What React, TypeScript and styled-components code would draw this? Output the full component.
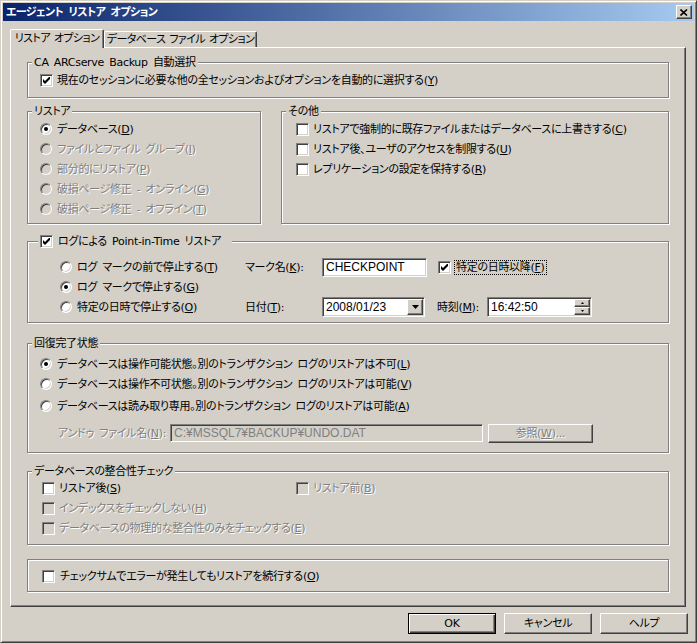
import React from 'react';
import styled, { createGlobalStyle, css } from 'styled-components';

const GlobalStyle = createGlobalStyle`
    html, body {
        margin: 0;
        padding: 0;
        background: #d4d0c8;
    }
    body {
        font-family: "DejaVu Sans", "Noto Sans CJK JP", sans-serif;
        font-size: 11px;
        line-height: 13px;
        letter-spacing: -0.3px;
        word-spacing: 2px;
        color: #000;
        font-feature-settings: "palt";
    }
`;

const sunken = css`
    border: 1px solid;
    border-color: #808080 #fff #fff #808080;
    box-shadow: inset 1px 1px 0 #404040, inset -1px -1px 0 #d4d0c8;
`;

const raised = css`
    border: 1px solid;
    border-color: #fff #404040 #404040 #fff;
    box-shadow: inset -1px -1px 0 #808080;
`;

const Window = styled.div`
    width: 697px;
    height: 643px;
    box-sizing: border-box;
    background: #d4d0c8;
    border: 1px solid;
    border-color: #d4d0c8 #404040 #404040 #d4d0c8;
    box-shadow: inset 1px 1px 0 #fff, inset -1px -1px 0 #808080;
    padding: 2px;
    display: flex;
    flex-direction: column;
`;

const TitleBar = styled.div`
    height: 18px;
    flex-shrink: 0;
    background: linear-gradient(to right, #0a246a, #a6caf0);
    display: flex;
    align-items: center;
    justify-content: space-between;
    padding: 0 2px 0 3px;
    color: #fff;
    font-weight: bold;
    font-size: 11px;
    letter-spacing: -0.6px;
`;

const CloseButton = styled.div`
    box-sizing: border-box;
    width: 16px;
    height: 14px;
    background: #d4d0c8;
    ${raised};
    display: flex;
    align-items: center;
    justify-content: center;
`;

const Body = styled.div`
    padding: 8px 7px 0 7px;
    display: flex;
    flex-direction: column;
`;

const TabStrip = styled.div`
    height: 18px;
    display: flex;
    align-items: flex-end;
`;

const Tab = styled.div<{ $active?: boolean; $w: number }>`
    box-sizing: border-box;
    width: ${(p) => p.$w}px;
    height: ${(p) => (p.$active ? 19 : 16)}px;
    margin-bottom: ${(p) => (p.$active ? -1 : 0)}px;
    position: relative;
    z-index: ${(p) => (p.$active ? 2 : 0)};
    background: #d4d0c8;
    border-top: 1px solid #fff;
    border-left: 1px solid #fff;
    border-right: 1px solid #404040;
    border-radius: 2px 2px 0 0;
    box-shadow: inset -1px 0 0 #808080;
    display: flex;
    align-items: center;
    justify-content: center;
    padding-bottom: ${(p) => (p.$active ? 1 : 0)}px;
    white-space: nowrap;
    letter-spacing: -0.6px;
    word-spacing: 1px;
`;

const Panel = styled.div`
    box-sizing: border-box;
    width: 676px;
    height: 560px;
    border-top: 1px solid #fff;
    border-left: 1px solid #fff;
    border-right: 1px solid #404040;
    border-bottom: 1px solid #404040;
    box-shadow: inset -1px -1px 0 #808080;
    padding: 0 16px;
    display: flex;
    flex-direction: column;
`;

const Group = styled.div<{ $h: number; $mt?: number; $w?: number; $ml?: number; $pad: string }>`
    position: relative;
    box-sizing: border-box;
    flex-shrink: 0;
    height: ${(p) => p.$h}px;
    margin-top: ${(p) => p.$mt ?? 0}px;
    margin-left: ${(p) => p.$ml ?? 0}px;
    width: ${(p) => (p.$w ? `${p.$w}px` : '100%')};
    border: 1px solid #808080;
    box-shadow: inset 1px 1px 0 #fff, 1px 1px 0 #fff;
    padding: ${(p) => p.$pad};
`;

const GroupRow = styled.div`
    display: flex;
    margin-top: 13px;
`;

const GroupTitle = styled.div`
    position: absolute;
    top: -7px;
    left: 4px;
    padding: 0 2px;
    background: #d4d0c8;
    white-space: nowrap;
`;

const GroupHeader = styled.div`
    position: absolute;
    top: -8px;
    left: 10px;
    width: 194px;
    height: 15px;
    padding-left: 2px;
    box-sizing: border-box;
    background: #d4d0c8;
    display: flex;
    align-items: center;
`;

const Row = styled.div<{ $h?: number; $mt?: number; $pl?: number }>`
    display: flex;
    align-items: center;
    height: ${(p) => p.$h ?? 20}px;
    margin-top: ${(p) => p.$mt ?? 0}px;
    padding-left: ${(p) => p.$pl ?? 0}px;
    white-space: nowrap;
`;

const Cell = styled.div<{ $w: number; $ml?: number }>`
    width: ${(p) => p.$w}px;
    margin-left: ${(p) => p.$ml ?? 0}px;
    flex-shrink: 0;
    display: flex;
    align-items: center;
`;

const Option = styled.span<{ $gap: number }>`
    display: inline-flex;
    align-items: center;
    gap: ${(p) => p.$gap}px;
`;

const Text = styled.span<{ $disabled?: boolean }>`
    color: ${(p) => (p.$disabled ? '#808080' : '#000')};
    text-shadow: ${(p) => (p.$disabled ? '1px 1px 0 #fff' : 'none')};
    white-space: nowrap;
`;

const Key = styled.u`
    text-underline-offset: 1px;
`;

const Focus = styled.span`
    outline: 1px dotted #000;
    outline-offset: 0;
    padding: 0 1px;
`;

const CheckBox = styled.span<{ $disabled?: boolean }>`
    box-sizing: border-box;
    width: 13px;
    height: 13px;
    flex-shrink: 0;
    background: ${(p) => (p.$disabled ? '#d4d0c8' : '#fff')};
    ${sunken};
    display: flex;
    align-items: center;
    justify-content: center;
`;

const RadioDot = styled.span<{ $disabled?: boolean; $checked?: boolean }>`
    box-sizing: border-box;
    position: relative;
    width: 12px;
    height: 12px;
    flex-shrink: 0;
    border-radius: 50%;
    background: ${(p) => (p.$disabled ? '#d4d0c8' : '#fff')};
    ${sunken};
    &::after {
        content: '';
        display: ${(p) => (p.$checked ? 'block' : 'none')};
        position: absolute;
        left: 3px;
        top: 3px;
        width: 4px;
        height: 4px;
        border-radius: 50%;
        background: #000;
    }
`;

const TextBox = styled.div<{ $w: number; $h: number; $disabled?: boolean }>`
    box-sizing: border-box;
    width: ${(p) => p.$w}px;
    height: ${(p) => p.$h}px;
    flex-shrink: 0;
    background: ${(p) => (p.$disabled ? '#d4d0c8' : '#fff')};
    color: ${(p) => (p.$disabled ? '#808080' : '#000')};
    ${sunken};
    padding: 1px 1px 1px 3px;
    display: flex;
    align-items: center;
    font-family: "Liberation Sans", "Noto Sans CJK JP", sans-serif;
    font-size: 12px;
    letter-spacing: 0;
    word-spacing: 0;
`;

const BoxValue = styled.span`
    flex: 1;
    white-space: nowrap;
`;

const DropButton = styled.span`
    box-sizing: border-box;
    width: 16px;
    height: 100%;
    background: #d4d0c8;
    ${raised};
    display: flex;
    align-items: center;
    justify-content: center;
`;

const Spinner = styled.span`
    width: 16px;
    height: 100%;
    display: flex;
    flex-direction: column;
`;

const SpinHalf = styled.span`
    box-sizing: border-box;
    flex: 1;
    background: #d4d0c8;
    ${raised};
    display: flex;
    align-items: center;
    justify-content: center;
`;

const ButtonRow = styled.div`
    display: flex;
    justify-content: flex-end;
    gap: 8px;
    margin-top: 6px;
    margin-right: -1px;
`;

const Button = styled.button<{ $default?: boolean; $w?: number; $h?: number; $ml?: number }>`
    box-sizing: border-box;
    width: ${(p) => p.$w ?? 88}px;
    height: ${(p) => p.$h ?? 21}px;
    margin-left: ${(p) => p.$ml ?? 0}px;
    padding: 0;
    font: inherit;
    letter-spacing: inherit;
    word-spacing: inherit;
    color: #000;
    background: #d4d0c8;
    ${raised};
    ${(p) =>
        p.$default &&
        css`
            border: 1px solid #000;
            box-shadow: inset 1px 1px 0 #fff, inset -1px -1px 0 #404040, inset -2px -2px 0 #808080;
        `}
    display: flex;
    align-items: center;
    justify-content: center;
`;

const Tick = () => (
    <svg width="7" height="7" viewBox="0 0 7 7">
        <polygon points="0,2 2,4 7,-1 7,2 2,7 0,5" fill="#000" />
    </svg>
);

const Check = ({
    checked,
    disabled,
    gap = 4,
    children,
}: {
    checked?: boolean;
    disabled?: boolean;
    gap?: number;
    children: React.ReactNode;
}) => (
    <Option $gap={gap}>
        <CheckBox $disabled={disabled}>{checked && <Tick />}</CheckBox>
        {children}
    </Option>
);

const Radio = ({
    checked,
    disabled,
    children,
}: {
    checked?: boolean;
    disabled?: boolean;
    children: React.ReactNode;
}) => (
    <Option $gap={5}>
        <RadioDot $checked={checked} $disabled={disabled} />
        <Text $disabled={disabled}>{children}</Text>
    </Option>
);

const restoreItems = [
    { id: 1, label: 'データベース', key: 'D', checked: true, disabled: false },
    { id: 2, label: 'ファイルとファイル グループ', key: 'I', checked: false, disabled: true },
    { id: 3, label: '部分的にリストア', key: 'P', checked: false, disabled: true },
    { id: 4, label: '破損ページ修正 - オンライン', key: 'G', checked: false, disabled: true },
    { id: 5, label: '破損ページ修正 - オフライン', key: 'T', checked: false, disabled: true },
];

const otherItems = [
    { id: 1, label: 'リストアで強制的に既存ファイルまたはデータベースに上書きする', key: 'C' },
    { id: 2, label: 'リストア後、ユーザのアクセスを制限する', key: 'U' },
    { id: 3, label: 'レプリケーションの設定を保持する', key: 'R' },
];

const recoveryItems = [
    { id: 1, label: 'データベースは操作可能状態。別のトランザクション ログのリストアは不可', key: 'L', mt: 0 },
    { id: 2, label: 'データベースは操作不可状態。別のトランザクション ログのリストアは可能', key: 'V', mt: 0 },
    { id: 3, label: 'データベースは読み取り専用。別のトランザクション ログのリストアは可能', key: 'A', mt: 2 },
];

const App = () => {
    return (
        <>
            <GlobalStyle />
            <Window>
                <TitleBar>
                    <span>エージェント リストア オプション</span>
                    <CloseButton>
                        <svg width="8" height="7" viewBox="0 0 8 7">
                            <path d="M0.5 0.5 L7 6.5 M7 0.5 L0.5 6.5" stroke="#000" strokeWidth="1.6" />
                        </svg>
                    </CloseButton>
                </TitleBar>
                <Body>
                    <TabStrip>
                        <Tab $active $w={94}>リストア オプション</Tab>
                        <Tab $w={153}>データベース ファイル オプション</Tab>
                    </TabStrip>
                    <Panel>
                        <Group $h={36} $mt={14} $pad="7px 0 0 12px">
                            <GroupTitle>CA ARCserve Backup 自動選択</GroupTitle>
                            <Row>
                                <Check checked>
                                    <Text>
                                        現在のセッションに必要な他の全セッションおよびオプションを自動的に選択する(<Key>Y</Key>)
                                    </Text>
                                </Check>
                            </Row>
                        </Group>

                        <GroupRow>
                            <Group $h={113} $w={234} $pad="7px 0 0 12px">
                                <GroupTitle>リストア</GroupTitle>
                                {restoreItems.map((item) => (
                                    <Row key={item.id}>
                                        <Radio checked={item.checked} disabled={item.disabled}>
                                            {item.label}(<Key>{item.key}</Key>)
                                        </Radio>
                                    </Row>
                                ))}
                            </Group>
                            <Group $h={113} $w={388} $ml={20} $pad="7px 0 0 14px">
                                <GroupTitle>その他</GroupTitle>
                                {otherItems.map((item) => (
                                    <Row key={item.id}>
                                        <Check>
                                            <Text>
                                                {item.label}(<Key>{item.key}</Key>)
                                            </Text>
                                        </Check>
                                    </Row>
                                ))}
                            </Group>
                        </GroupRow>

                        <Group $h={82} $mt={17} $pad="15px 0 0 32px">
                            <GroupHeader>
                                <Check checked gap={5}>
                                    <Text>ログによる Point-in-Time リストア</Text>
                                </Check>
                            </GroupHeader>
                            <Row>
                                <Cell $w={185}>
                                    <Radio>
                                        ログ マークの前で停止する(<Key>T</Key>)
                                    </Radio>
                                </Cell>
                                <Cell $w={77}>
                                    <Text>
                                        マーク名(<Key>K</Key>):
                                    </Text>
                                </Cell>
                                <TextBox $w={105} $h={19}>
                                    <BoxValue>CHECKPOINT</BoxValue>
                                </TextBox>
                                <Cell $w={150} $ml={11}>
                                    <Check checked>
                                        <Focus>
                                            <Text>
                                                特定の日時以降(<Key>F</Key>)
                                            </Text>
                                        </Focus>
                                    </Check>
                                </Cell>
                            </Row>
                            <Row>
                                <Radio checked>
                                    ログ マークで停止する(<Key>G</Key>)
                                </Radio>
                            </Row>
                            <Row>
                                <Cell $w={185}>
                                    <Radio>
                                        特定の日時で停止する(<Key>O</Key>)
                                    </Radio>
                                </Cell>
                                <Cell $w={77}>
                                    <Text>
                                        日付(<Key>T</Key>):
                                    </Text>
                                </Cell>
                                <TextBox $w={103} $h={20}>
                                    <BoxValue>2008/01/23</BoxValue>
                                    <DropButton>
                                        <svg width="7" height="4" viewBox="0 0 7 4">
                                            <polygon points="0,0 7,0 3.5,4" fill="#000" />
                                        </svg>
                                    </DropButton>
                                </TextBox>
                                <Cell $w={50} $ml={12}>
                                    <Text>
                                        時刻(<Key>M</Key>):
                                    </Text>
                                </Cell>
                                <TextBox $w={105} $h={20}>
                                    <BoxValue>16:42:50</BoxValue>
                                    <Spinner>
                                        <SpinHalf>
                                            <svg width="3" height="2" viewBox="0 0 3 2">
                                                <polygon points="1.5,0 3,2 0,2" fill="#000" />
                                            </svg>
                                        </SpinHalf>
                                        <SpinHalf>
                                            <svg width="3" height="2" viewBox="0 0 3 2">
                                                <polygon points="0,0 3,0 1.5,2" fill="#000" />
                                            </svg>
                                        </SpinHalf>
                                    </Spinner>
                                </TextBox>
                            </Row>
                        </Group>

                        <Group $h={110} $mt={20} $pad="10px 0 0 12px">
                            <GroupTitle>回復完了状態</GroupTitle>
                            {recoveryItems.map((item) => (
                                <Row key={item.id} $mt={item.mt}>
                                    <Radio checked={item.id === 1}>
                                        {item.label}(<Key>{item.key}</Key>)
                                    </Radio>
                                </Row>
                            ))}
                            <Row $mt={7} $pl={18}>
                                <Cell $w={112}>
                                    <Text $disabled>
                                        アンドゥ ファイル名(<Key>N</Key>):
                                    </Text>
                                </Cell>
                                <TextBox $w={313} $h={18} $disabled>
                                    <BoxValue>C:¥MSSQL7¥BACKUP¥UNDO.DAT</BoxValue>
                                </TextBox>
                                <Button $w={105} $h={19} $ml={5}>
                                    <Text $disabled>
                                        参照(<Key>W</Key>)...
                                    </Text>
                                </Button>
                            </Row>
                        </Group>

                        <Group $h={74} $mt={18} $pad="6px 0 0 14px">
                            <GroupTitle>データベースの整合性チェック</GroupTitle>
                            <Row>
                                <Cell $w={254}>
                                    <Check>
                                        <Text>
                                            リストア後(<Key>S</Key>)
                                        </Text>
                                    </Check>
                                </Cell>
                                <Check disabled>
                                    <Text $disabled>
                                        リストア前(<Key>B</Key>)
                                    </Text>
                                </Check>
                            </Row>
                            <Row>
                                <Check disabled>
                                    <Text $disabled>
                                        インデックスをチェックしない(<Key>H</Key>)
                                    </Text>
                                </Check>
                            </Row>
                            <Row>
                                <Check disabled>
                                    <Text $disabled>
                                        データベースの物理的な整合性のみをチェックする(<Key>E</Key>)
                                    </Text>
                                </Check>
                            </Row>
                        </Group>

                        <Group $h={33} $mt={14} $pad="6px 0 0 14px">
                            <Row>
                                <Check gap={5}>
                                    <Text>
                                        チェックサムでエラーが発生してもリストアを続行する(<Key>O</Key>)
                                    </Text>
                                </Check>
                            </Row>
                        </Group>
                    </Panel>
                    <ButtonRow>
                        <Button $default>OK</Button>
                        <Button>キャンセル</Button>
                        <Button>ヘルプ</Button>
                    </ButtonRow>
                </Body>
            </Window>
        </>
    );
};

export default App;
